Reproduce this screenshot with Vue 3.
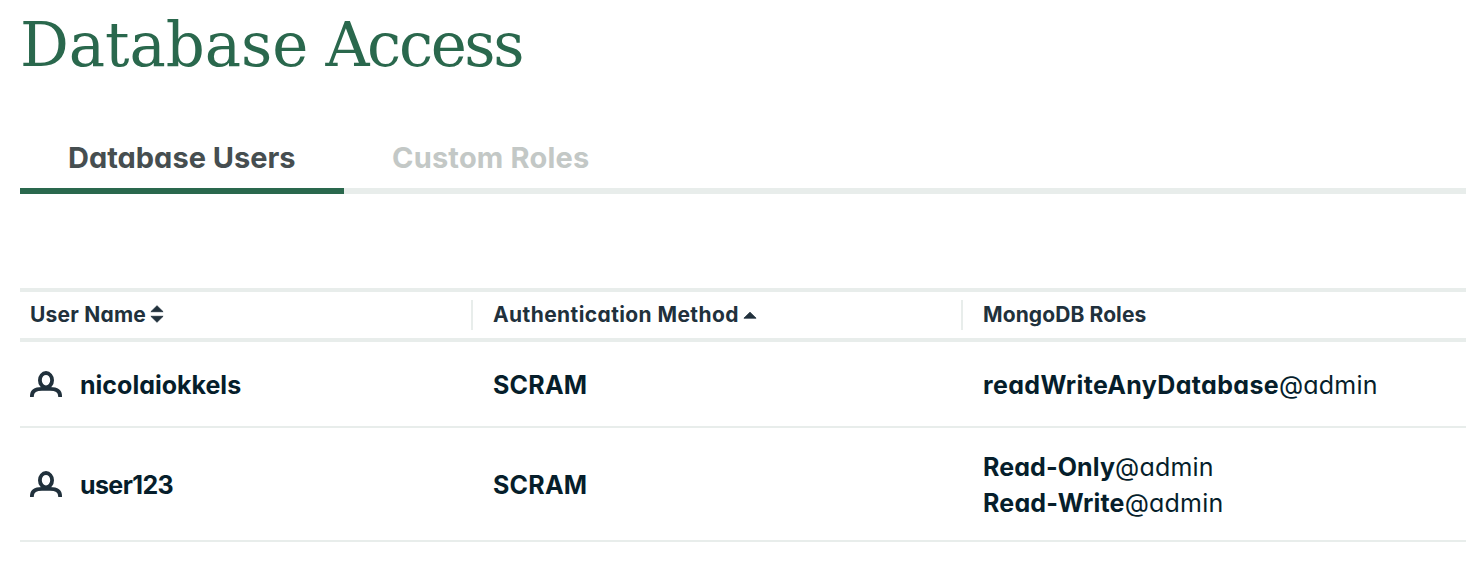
<script setup>
const users = [
  { name: 'nicolaiokkels', nameClass: 'name-a', method: 'SCRAM', roles: [{ role: 'readWriteAnyDatabase', db: '@admin', cls: 'role-a' }] },
  {
    name: 'user123', nameClass: 'name-b', method: 'SCRAM',
    roles: [
      { role: 'Read-Only', db: '@admin', cls: 'role-b' },
      { role: 'Read-Write', db: '@admin', cls: 'role-c' },
    ],
  },
]
</script>

<template>
  <main class="page">
    <h1 class="title">Database <span class="title-end">Access</span></h1>
    <nav class="tabs">
      <a class="tab active"><span class="users-label">Database Users</span></a>
      <a class="tab"><span class="roles-label">Custom Roles</span></a>
    </nav>
    <section class="table">
      <div class="row head">
        <div class="cell">
          <div class="label">
            <span class="h-user">User Name</span>
            <svg class="sort" width="14" height="18" viewBox="0 0 14 18"><path d="M.9 6.700 7 .7 13.1 6.700zM.9 11.300 7 17.300 13.1 11.300z" /></svg>
          </div>
        </div>
        <div class="cell">
          <div class="label">
            <span class="h-auth">Authentication Method</span>
            <svg class="sort" width="14" height="18" viewBox="0 0 14 18"><path d="M.9 13.200 7 7.200 13.1 13.200z" /></svg>
          </div>
        </div>
        <div class="cell"><div class="label"><span class="h-roles">MongoDB Roles</span></div></div>
      </div>
      <div v-for="user in users" :key="user.name" class="row user">
        <div class="cell">
          <svg class="person" width="32" height="26" viewBox="0 0 32 26">
            <ellipse cx="16" cy="9.2" rx="6.1" ry="7.2" />
            <path d="M1.9 26V25c0-5.3 4.2-7.2 10.1-7.2h8c5.9 0 10.1 1.9 10.1 7.2V26" />
          </svg>
          <strong :class="user.nameClass">{{ user.name }}</strong>
        </div>
        <div class="cell"><strong class="method">{{ user.method }}</strong></div>
        <div class="cell roles">
          <div v-for="r in user.roles" :key="r.role" class="role"><strong :class="r.cls">{{ r.role }}</strong><span class="db">{{ r.db }}</span></div>
        </div>
      </div>
    </section>
  </main>
</template>

<style>
body { background: #fff; overflow: hidden; }
</style>

<style scoped>
.page {
  height: 568px;
  box-sizing: border-box;
  padding-left: 20px;
  font-family: Inter, "Liberation Sans", sans-serif;
  font-feature-settings: "cv11" 1;
  color: #061e2b;
  white-space: nowrap;
  overflow: hidden;
}
.title {
  margin: 0;
  height: 124px;
  line-height: 89px;
  font-family: "DejaVu Serif", serif;
  font-weight: 400;
  font-size: 61px;
  letter-spacing: -0.1px;
  color: #2a684d;
}
.title-end { letter-spacing: -2.4px; margin-left: -2px; }
.tabs {
  display: flex;
  height: 70px;
  box-sizing: border-box;
  box-shadow: inset 0 -6px #e8edeb;
}
.tab {
  padding: 0 48px;
  line-height: 68px;
  font-size: 29px;
  font-weight: 700;
  color: #c3c8c6;
}
.tab.active {
  box-sizing: border-box;
  width: 324px;
  color: #464e50;
  box-shadow: inset 0 -6px #2a684d;
}
.users-label { letter-spacing: 0; }
.roles-label { letter-spacing: 0.2px; }
.table { margin-top: 94px; }
.row {
  display: grid;
  grid-template-columns: 451px 490px 1fr;
  align-items: center;
  box-sizing: border-box;
}
.head {
  height: 54px;
  border-top: 4px solid #e8edeb;
  border-bottom: 4px solid #e8edeb;
  font-size: 21px;
  font-weight: 700;
  color: #21313c;
}
.cell { display: flex; align-items: center; padding-left: 22px; }
.cell:first-child { padding-left: 10px; }
.head .cell { height: 30px; box-sizing: border-box; }
.head .cell + .cell { border-left: 2px solid #e8edeb; padding-left: 20px; }
.label { display: flex; align-items: center; padding-bottom: 2px; }
.h-user { letter-spacing: 0.22px; }
.h-auth { letter-spacing: 0.4px; }
.h-roles { letter-spacing: 0.1px; }
.sort { margin-left: 4px; fill: #21313c; stroke: #21313c; stroke-linejoin: round; stroke-width: 0.8; }
.user {
  height: 86px;
  border-bottom: 2px solid #e8edeb;
  font-size: 25px;
  line-height: 36px;
}
.user:last-child { height: 114px; }
.person { fill: none; stroke: #21313c; stroke-width: 3.8; margin-right: 18px; }
strong { font-weight: 650; }
.user strong, .db { position: relative; top: 1px; }
.name-b { letter-spacing: -0.6px; }
.method { letter-spacing: 0.2px; }
.role-a { letter-spacing: 0.35px; }
.role-b { letter-spacing: 0.1px; }
.role-c { letter-spacing: 0.2px; }
.cell.roles { flex-direction: column; align-items: flex-start; }
.db { font-weight: 370; letter-spacing: 0.2px; }
</style>
